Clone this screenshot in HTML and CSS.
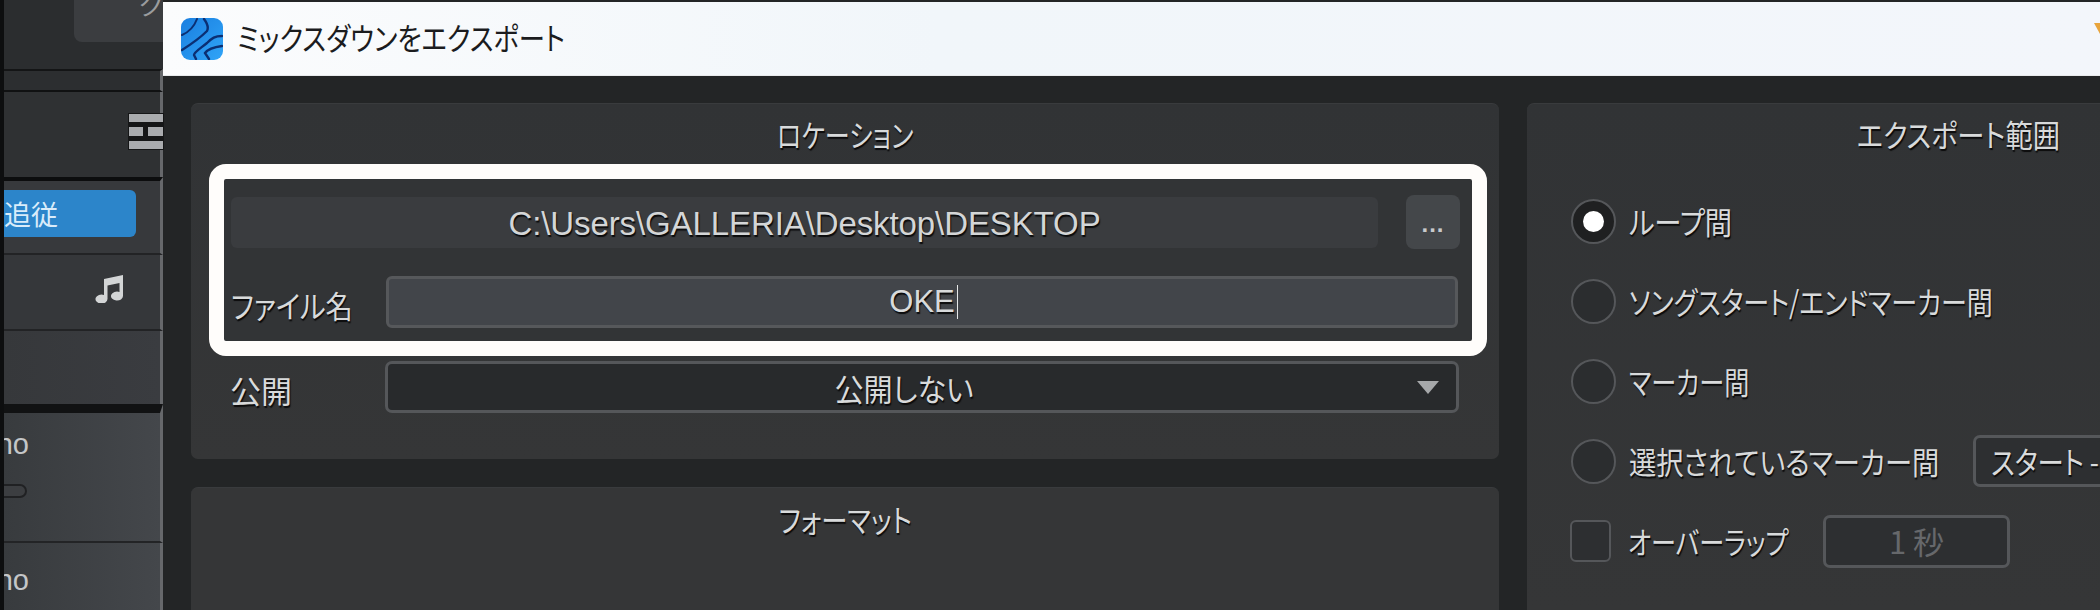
FILE: index.html
```html
<!DOCTYPE html>
<html lang="ja">
<head>
<meta charset="utf-8">
<title>ミックスダウンをエクスポート</title>
<link rel="stylesheet" href="styles.css">
</head>
<body>
<div class="app">
  <aside class="side">
    <div class="row row-top"><div class="top-btn"><span class="top-btn-text">クリア</span></div></div>
    <div class="row row-thin"></div>
    <div class="row row-tools">
      <div class="grid-icon"><i></i><b><u></u><u></u></b><i></i></div>
    </div>
    <div class="row row-follow"><div class="follow">追従</div></div>
    <div class="row row-note">
      <svg class="note" viewBox="0 0 30 28"><path d="M9 4 L28 0 V21 A6 4.5 0 1 1 24.5 17 V8 L12.5 10.5 V24 A6 4.5 0 1 1 9 20 Z" fill="#d3d5d6"/></svg>
    </div>
    <div class="row row-empty"></div>
    <div class="row row-track"><span class="mono">mono</span><div class="pill"></div></div>
    <div class="row row-track2"><span class="mono">mono</span></div>
  </aside>

  <main class="win">
    <header class="titlebar">
      <svg class="app-icon" viewBox="0 0 42 42">
        <defs><linearGradient id="ic" x1="0" y1="0" x2="1" y2="1"><stop offset="0" stop-color="#1a7fe0"/><stop offset="1" stop-color="#30a4f7"/></linearGradient></defs>
        <rect width="42" height="42" rx="9" fill="url(#ic)"/>
        <g fill="none" stroke="#0b2f73" stroke-width="2" stroke-linecap="round">
          <path d="M16 1 C13 9 8 14 1 17"/>
          <path d="M23 1 C26 5 28 9 26 13 C21 18 12 25 1 32" stroke-width="2.4"/>
          <path d="M41 18 C34 18 31 20 26 25 C20 30 13 34 13 37 L15 41" stroke-width="2.4"/>
          <path d="M41 28 C34 29 27 31 24 35 L28 41" stroke-width="2.4"/>
        </g>
      </svg>
      <span class="jp s85 title-text">ミックスダウンをエクスポート</span>
      <span class="corner"></span>
    </header>

    <div class="body">
      <div class="col">
        <section class="panel loc">
          <h2 class="head"><span class="jp s81">ロケーション</span></h2>
          <div class="hl">
            <div class="path-row">
              <div class="path">C:\Users\GALLERIA\Desktop\DESKTOP</div>
              <div class="more">...</div>
            </div>
            <div class="file-row">
              <label class="lbl"><span class="jp s88 jp-left">ファイル名</span></label>
              <div class="input"><span class="oke">OKE</span><span class="caret"></span></div>
            </div>
          </div>
          <div class="pub-row">
            <label class="lbl"><span class="jp jp-left">公開</span></label>
            <div class="select"><span class="jp s94">公開しない</span><span class="tri"></span></div>
          </div>
        </section>
        <section class="panel fmt">
          <h2 class="head"><span class="jp s85">フォーマット</span></h2>
        </section>
      </div>

      <section class="panel range">
        <h2 class="head"><span class="jp s88">エクスポート範囲</span></h2>
        <div class="opts">
          <div class="opt"><span class="radio on"></span><span class="jp s88 jp-left">ループ間</span></div>
          <div class="opt"><span class="radio"></span><span class="jp s84 jp-left">ソングスタート/エンドマーカー間</span></div>
          <div class="opt"><span class="radio"></span><span class="jp s81 jp-left">マーカー間</span></div>
          <div class="opt"><span class="radio"></span><span class="opt-lbl wide"><span class="jp s88 jp-left">選択されているマーカー間</span></span><div class="drop"><span class="jp s85 jp-left">スタート - エンド</span></div></div>
          <div class="opt"><span class="check"></span><span class="opt-lbl short"><span class="jp s81 jp-left">オーバーラップ</span></span><div class="sec">1 秒</div></div>
        </div>
      </section>
    </div>
  </main>
</div>
</body>
</html>
```

FILE: styles.css
```css
* { box-sizing: border-box; }
html, body { margin: 0; padding: 0; width: 2100px; height: 610px; overflow: hidden; background: #232526; }
body { font-family: "Liberation Sans", "Noto Sans CJK JP", sans-serif; color: #d8dadb; }

.app { display: flex; width: 2100px; height: 610px; }

/* sidebar */
.side { flex: none; width: 163px; height: 610px; border-left: 4px solid #0d0e0f; display: flex; flex-direction: column; background: #2e3032; position: relative; z-index: 1; }
.row { flex: none; border-right: 3px solid #66686b; overflow: hidden; background: linear-gradient(90deg, #303234, #37393c); }
.row-top { height: 69px; border-right: 0; background: #2b2d2f; }
.top-btn { margin-left: 70px; height: 42px; background: #3b3d40; border-radius: 0 0 0 8px; position: relative; overflow: hidden; }
.top-btn-text { position: absolute; left: 64px; top: -13px; font: 26px/34px "Noto Sans CJK JP", sans-serif; color: #9a9c9e; white-space: nowrap; }
.row-thin { height: 23px; border-top: 2px solid #141516; border-bottom: 2px solid #101112; background: #2c2e30; }
.row-tools { height: 85px; display: flex; justify-content: flex-end; align-items: flex-start; padding-top: 22px; overflow: visible; background: #2f3133; }
.grid-icon { width: 34px; margin-right: -3px; display: flex; flex-direction: column; gap: 5px; background: #151617; position: relative; outline: 1px solid #151617; }
.grid-icon i { display: block; height: 8px; background: #a9abae; }
.grid-icon b { display: flex; justify-content: space-between; height: 9px; }
.grid-icon u { display: block; background: #a9abae; height: 9px; width: 14px; }
.grid-icon u:last-child { width: 15px; }
.row-follow { height: 78px; border-top: 4px solid #0c0d0e; border-bottom: 2px solid #222325; padding-top: 9px; background: #37393c; }
.follow { width: 132px; height: 47px; background: #2c85ca; border-radius: 0 6px 6px 0; color: #d9ecfa; font: 27px/47px "Noto Sans CJK JP", sans-serif; }
.row-note { height: 76px; border-bottom: 2px solid #222325; display: flex; justify-content: flex-end; padding: 20px 35px 0 0; background: #35373a; }
.note { width: 30px; height: 28px; }
.row-empty { height: 73px; background: linear-gradient(90deg, #36383b, #3a3c40); }
.row-track { height: 139px; border-top: 9px solid #111213; border-bottom: 2px solid #232426; position: relative; background: linear-gradient(90deg, #383b3e, #44474b); }
.row-track2 { flex: 1; position: relative; background: linear-gradient(90deg, #383b3e, #44474b); }
.mono { position: absolute; right: 131px; font: 29px/34px "Liberation Sans", sans-serif; color: #c4c6c8; white-space: nowrap; }
.row-track .mono { top: 14px; }
.row-track2 .mono { top: 20px; }
.pill { position: absolute; left: -30px; top: 71px; width: 53px; height: 14px; border-radius: 7px; background: #3c3e41; border: 2px solid #202123; }

/* window */
.win { flex: none; width: 1937px; height: 608px; margin-top: 2px; display: flex; flex-direction: column; background: #232526; overflow: hidden; }
.titlebar { flex: none; height: 74px; background: linear-gradient(90deg, #fbfcfd, #f1f6fa 40%, #f3f6fb); display: flex; align-items: center; padding-left: 18px; position: relative; border-bottom: 1px solid #e8eaec; }
.app-icon { flex: none; width: 42px; height: 42px; margin-top: 1px; }
.title-text { margin: -3px 0 0 14px; }
.corner { position: absolute; right: 0; top: 21px; width: 6px; height: 11px; background: #e8a43c; clip-path: polygon(0 0, 100% 0, 100% 100%); }

.body { flex: 1; display: flex; gap: 28px; padding: 27px 0 0 28px; min-height: 0; }
.col { flex: none; width: 1308px; display: flex; flex-direction: column; gap: 28px; }
.panel { background: linear-gradient(180deg, #313335, #353637); border-radius: 7px 7px 0 0; border-top: 1px solid #393b3d; }
.loc { border-radius: 7px; padding-top: 13px; padding-bottom: 46px; }
.fmt { flex: 1; padding-top: 14px; background: #353637; }
.range { flex: none; width: 863px; padding-top: 13px; }

.head { margin: 0 0 13px; height: 34px; font-weight: 400; font-size: 31px; line-height: 34px; text-align: center; }

.jp { display: inline-block; font-family: "Noto Sans CJK JP", sans-serif; font-size: 31px; line-height: 34px; font-weight: 400; font-feature-settings: "palt"; white-space: nowrap; text-shadow: 1px 2px 1px #0b0b0c; color: #d8dadb; }
.s81 { transform: scaleX(.81); }
.s84 { transform: scaleX(.84); }
.s85 { transform: scaleX(.85); }
.s88 { transform: scaleX(.88); }
.s94 { transform: scaleX(.94); }
.jp-left { transform-origin: left center; }
.title-text { transform-origin: left center; }
.title-text.jp { color: #1b1c1e; text-shadow: none; }

/* highlighted group */
.hl { margin: 0 12px 0 18px; border: 15px solid #fffdfb; border-radius: 17px; background: #323436; padding: 16px 12px 13px 7px; }
.path-row { display: flex; align-items: center; gap: 28px; height: 54px; }
.path { flex: 1; height: 51px; background: #3a3c3f; border-radius: 6px; text-align: center; font-size: 33px; line-height: 54px; text-shadow: 1px 2px 1px #0b0b0c; letter-spacing: -.1px; color: #d4d6d7; }
.more { flex: none; width: 54px; height: 54px; background: #44474a; border-radius: 8px; text-align: center; font-size: 24px; line-height: 58px; letter-spacing: 1px; color: #c8cacc; font-weight: 700; }
.file-row { display: flex; align-items: center; height: 52px; margin-top: 27px; }
.lbl { flex: none; width: 155px; display: block; padding-top: 5px; }
.input { flex: 1; height: 52px; margin-right: 2px; border: 3px solid #56585b; border-radius: 6px; background: #42454a; display: flex; justify-content: center; align-items: center; font-size: 31px; text-shadow: 1px 2px 1px #0b0b0c; padding-left: 3px; }
.caret { width: 1px; height: 34px; background: #e6e8e9; margin-left: 2px; }
.pub-row { display: flex; align-items: center; margin: 5px 0 0 39px; }
.select { width: 1074px; height: 52px; border: 3px solid #55575a; border-radius: 7px; background: #282a2c; text-align: center; position: relative; padding-right: 36px; line-height: 46px; }
.select .jp { vertical-align: middle; }
.tri { position: absolute; right: 17px; top: 17px; width: 0; height: 0; border-left: 11px solid transparent; border-right: 11px solid transparent; border-top: 13px solid #a6a8aa; }

/* right */
.opts { display: flex; flex-direction: column; gap: 24px; margin-top: 42px; padding-left: 44px; }
.opt { display: flex; align-items: center; height: 56px; }
.radio { flex: none; width: 45px; height: 45px; margin-right: 13px; border-radius: 50%; border: 2px solid #55575a; background: #2b2d2f; position: relative; }
.radio.on { background: #1f2021; }
.radio.on::after { content: ""; position: absolute; left: 10px; top: 10px; width: 21px; height: 21px; border-radius: 50%; background: #fff; }
.check { flex: none; width: 41px; height: 42px; margin: 0 17px 0 -1px; border: 2px solid #55575a; border-radius: 6px; background: #2d2f31; }
.opt-lbl { flex: none; display: block; }
.wide { width: 344px; }
.short { width: 195px; }
.drop { flex: none; width: 400px; height: 52px; border: 3px solid #55575a; border-radius: 7px; background: #2d2f31; padding-left: 15px; display: flex; align-items: center; white-space: nowrap; }
.sec { flex: none; width: 187px; height: 53px; border: 3px solid #55575a; border-radius: 7px; background: #2d2f31; text-align: center; font: 31px/46px "Noto Sans CJK JP", sans-serif; color: #66686b; }
```
